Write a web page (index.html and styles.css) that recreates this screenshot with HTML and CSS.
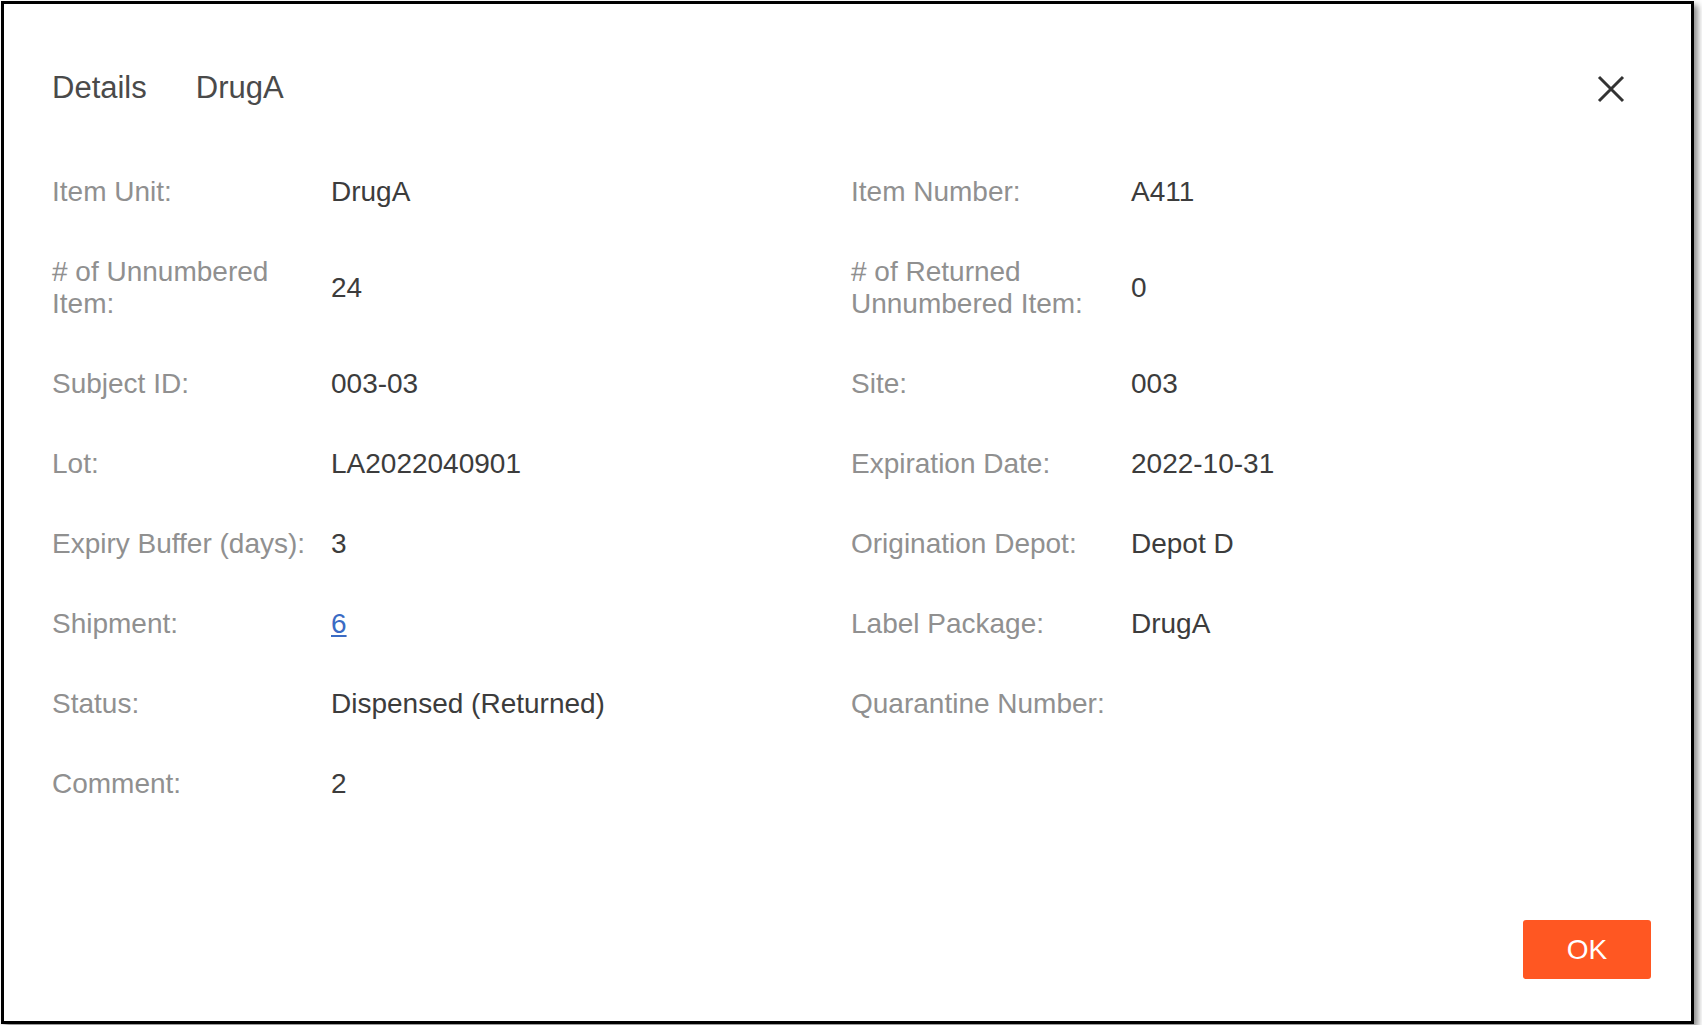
FILE: index.html
```html
<!DOCTYPE html>
<html>
<head>
  <meta charset="UTF-8">
  <title>Details DrugA</title>
  <link rel="stylesheet" href="styles.css">
</head>
<body>
  <div class="dialog">
    <div class="dialog-header">
      <div class="dialog-title">
        <span>Details</span>
        <span>DrugA</span>
      </div>
      <button class="close-button" title="Close">
        <svg width="28" height="28" viewBox="0 0 28 28">
          <path d="M2 2 L26 26 M26 2 L2 26" stroke="#333" stroke-width="3" fill="none"/>
        </svg>
      </button>
    </div>

    <div class="detail-grid">
      <div class="label">Item Unit:</div>
      <div class="value">DrugA</div>
      <div class="label">Item Number:</div>
      <div class="value">A411</div>

      <div class="label"># of Unnumbered Item:</div>
      <div class="value">24</div>
      <div class="label"># of Returned Unnumbered Item:</div>
      <div class="value">0</div>

      <div class="label">Subject ID:</div>
      <div class="value">003-03</div>
      <div class="label">Site:</div>
      <div class="value">003</div>

      <div class="label">Lot:</div>
      <div class="value">LA2022040901</div>
      <div class="label">Expiration Date:</div>
      <div class="value">2022-10-31</div>

      <div class="label">Expiry Buffer (days):</div>
      <div class="value">3</div>
      <div class="label">Origination Depot:</div>
      <div class="value">Depot D</div>

      <div class="label">Shipment:</div>
      <div class="value"><a href="#" class="link">6</a></div>
      <div class="label">Label Package:</div>
      <div class="value">DrugA</div>

      <div class="label">Status:</div>
      <div class="value">Dispensed (Returned)</div>
      <div class="label">Quarantine Number:</div>
      <div class="value"></div>

      <div class="label">Comment:</div>
      <div class="value">2</div>
      <div class="label"></div>
      <div class="value"></div>
    </div>

    <div class="dialog-footer">
      <button class="btn-ok">OK</button>
    </div>
  </div>
</body>
</html>
```

FILE: styles.css
```css
body {
  margin: 0;
  background: #fff;
  font-family: "Liberation Sans", Arial, sans-serif;
}
.dialog {
  margin: 1px;
  width: 1693px;
  height: 1023px;
  box-sizing: border-box;
  border: 3px solid #000;
  box-shadow: 4px 4px 6px rgba(0, 0, 0, 0.45);
  background: #fff;
  display: flex;
  flex-direction: column;
}
.dialog-header {
  display: flex;
  justify-content: space-between;
  align-items: flex-start;
  padding: 64px 60px 0 48px;
}
.dialog-title {
  display: flex;
  gap: 49px;
  font-size: 31px;
  line-height: 40px;
  color: #4a4a4a;
}
.close-button {
  background: none;
  border: none;
  padding: 0;
  width: 40px;
  height: 40px;
  display: flex;
  align-items: center;
  justify-content: center;
  cursor: pointer;
  margin-top: 1px;
}
.detail-grid {
  display: grid;
  grid-template-columns: 279px 520px 280px 1fr;
  align-items: center;
  padding: 43px 0 0 48px;
  font-size: 28px;
  line-height: 32px;
}
.label,
.value {
  padding: 24px 0;
  min-height: 32px;
}
.label {
  color: #909090;
  padding-right: 10px;
}
.value {
  color: #3c3c3c;
}
.link {
  color: #3a6bc4;
  text-decoration: underline;
}
.dialog-footer {
  margin-top: auto;
  display: flex;
  justify-content: flex-end;
  padding: 0 40px 42px 0;
}
.btn-ok {
  width: 128px;
  height: 59px;
  border: none;
  border-radius: 3px;
  background: #ff5722;
  color: #fff;
  font-family: "Liberation Sans", Arial, sans-serif;
  font-size: 28px;
  cursor: pointer;
}
```
